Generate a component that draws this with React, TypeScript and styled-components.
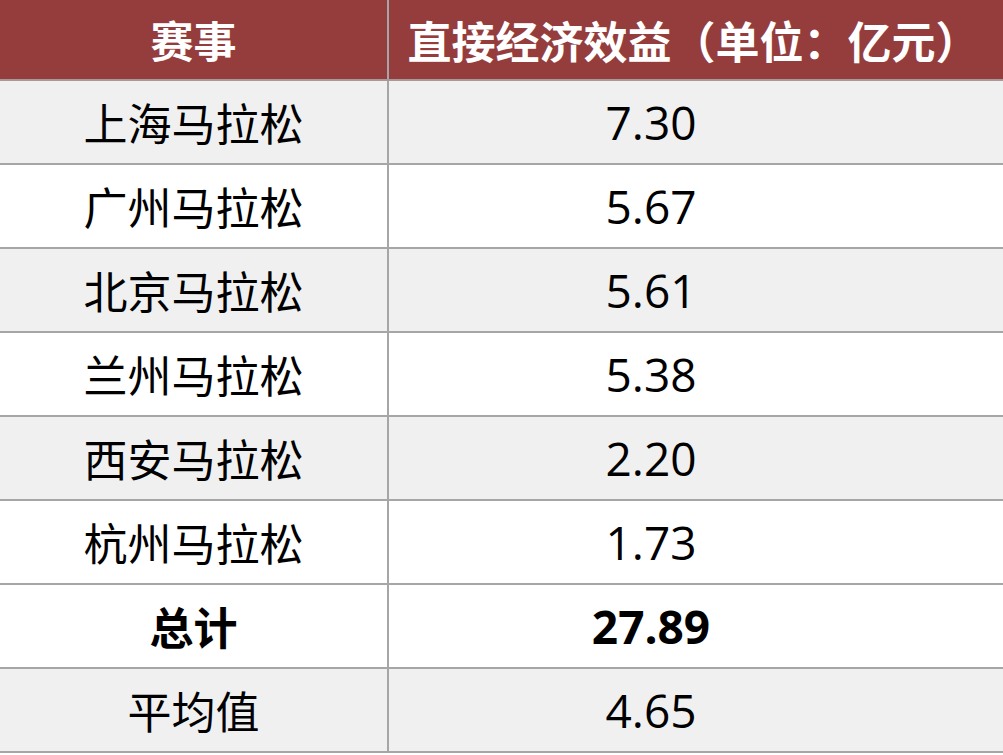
import React from 'react';
import styled, { createGlobalStyle } from 'styled-components';

interface RowData {
    name: string;
    value: string;
    shade: boolean;
    strong?: boolean;
}

const rows: RowData[] = [
    { name: '上海马拉松', value: '7.30', shade: true },
    { name: '广州马拉松', value: '5.67', shade: false },
    { name: '北京马拉松', value: '5.61', shade: true },
    { name: '兰州马拉松', value: '5.38', shade: false },
    { name: '西安马拉松', value: '2.20', shade: true },
    { name: '杭州马拉松', value: '1.73', shade: false },
    { name: '总计', value: '27.89', shade: false, strong: true },
    { name: '平均值', value: '4.65', shade: true },
];

const GlobalStyle = createGlobalStyle`
  html, body {
    margin: 0;
    padding: 0;
    background: #fff;
    overflow: hidden;
  }
  body {
    font-family: "Noto Sans CJK SC", "Noto Sans", sans-serif;
  }
`;

const Table = styled.table`
  width: 1003px;
  border-collapse: collapse;
  table-layout: fixed;
  color: #000;
`;

const HeadCell = styled.th<{ $first?: boolean }>`
  height: 79px;
  padding: 0 ${p => (p.$first ? '0' : '5px')} 0 0;
  background: #953d3d;
  color: #fff;
  font-size: ${p => (p.$first ? '43px' : '44px')};
  font-weight: 700;
  text-align: center;
  white-space: nowrap;
  border-bottom: 2px solid #a89898;
  border-left: ${p => (p.$first ? 'none' : '2px solid #a6a6a6')};
  line-height: 1;
`;

const Row = styled.tr<{ $shade: boolean }>`
  background: ${p => (p.$shade ? '#f0f0f0' : '#ffffff')};
`;

const NameCell = styled.td<{ $strong?: boolean }>`
  height: 82px;
  padding: 0;
  text-align: center;
  font-size: 44px;
  font-weight: ${p => (p.$strong ? 700 : 400)};
  border-bottom: 2px solid #a6a6a6;
  line-height: 1;
`;

const ValueCell = styled.td<{ $strong?: boolean }>`
  height: 82px;
  padding: 0 90px 0 0;
  text-align: center;
  font-family: "Open Sans", "Noto Sans CJK SC", sans-serif;
  font-size: 46px;
  font-weight: ${p => (p.$strong ? 700 : 400)};
  border-bottom: 2px solid #a6a6a6;
  border-left: 2px solid #a6a6a6;
  line-height: 1;
`;

const App: React.FC = () => {
    return (
        <>
            <GlobalStyle />
            <Table>
                <colgroup>
                    <col style={{ width: 388 }} />
                    <col />
                </colgroup>
                <thead>
                    <tr>
                        <HeadCell $first>赛事</HeadCell>
                        <HeadCell>直接经济效益（单位：亿元）</HeadCell>
                    </tr>
                </thead>
                <tbody>
                    {rows.map(r => (
                        <Row key={r.name} $shade={r.shade}>
                            <NameCell $strong={r.strong}>{r.name}</NameCell>
                            <ValueCell $strong={r.strong}>{r.value}</ValueCell>
                        </Row>
                    ))}
                </tbody>
            </Table>
        </>
    );
};

export default App;
